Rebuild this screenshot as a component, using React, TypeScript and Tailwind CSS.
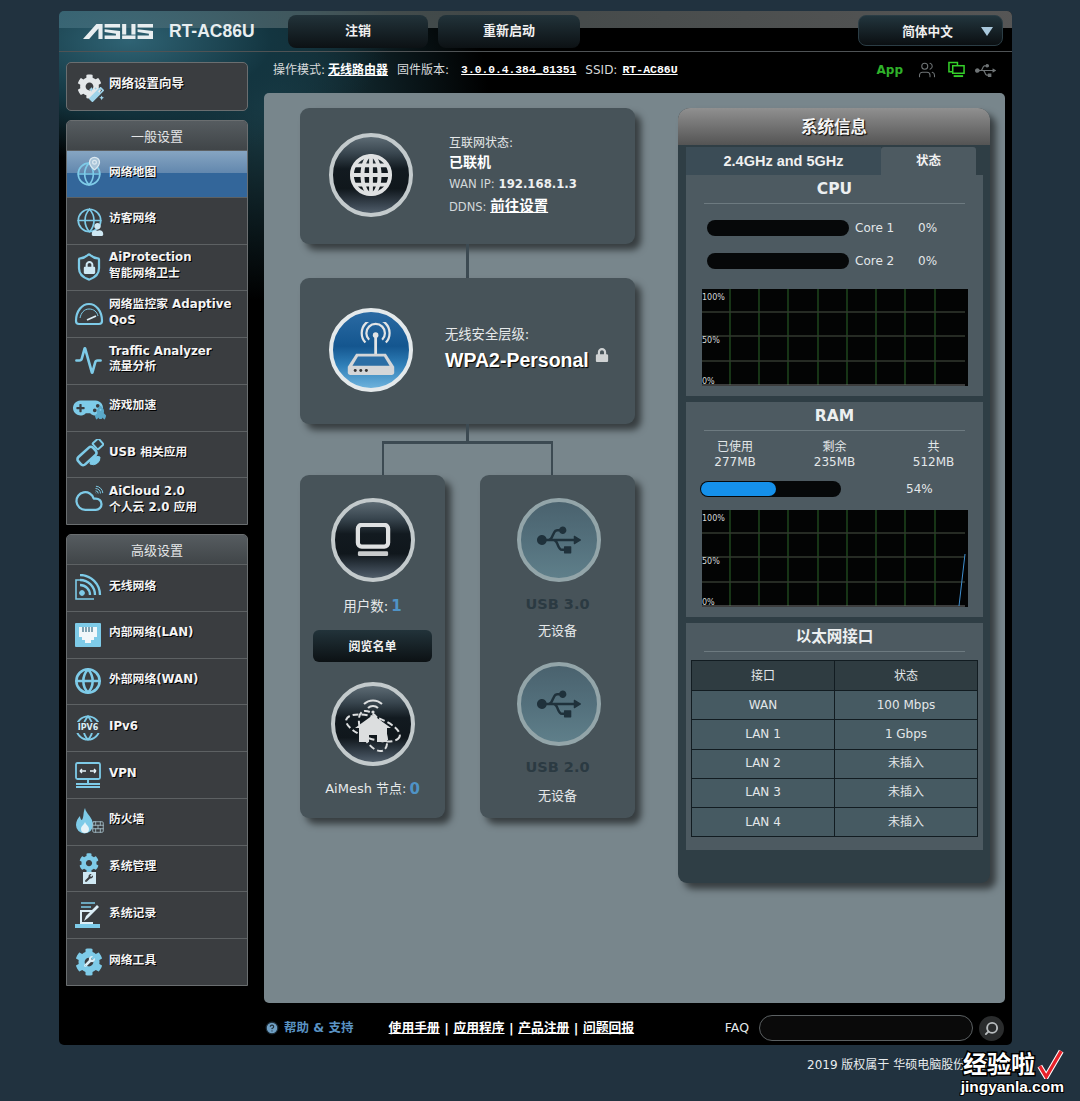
import React from 'react'
import {
  Globe, MapPin, Shield, Activity, Cloud, Wifi, BrickWall, Search, HelpCircle, Users,
} from 'lucide-react'
import { FaCog, FaGamepad, FaWrench, FaUsb, FaUser, FaLock, FaRocket, FaMagic } from 'react-icons/fa'

const FONT = "font-['DejaVu_Sans','Noto_Sans_CJK_SC',sans-serif]"

function AsusLogo() {
  return (
    <svg width="70" height="15" viewBox="0 0 68 17" preserveAspectRatio="none" fill="#e8eef0">
      <polygon points="0,17 13,0 19,0 19,17 15,17 15,5 6,17" />
      <rect x="21" y="0" width="15" height="4" />
      <polygon points="21,6 36,8 36,17 21,17 21,13 32,13 32,11 21,9" />
      <rect x="38" y="0" width="4" height="12" />
      <rect x="38" y="13" width="13" height="4" />
      <rect x="47" y="0" width="4" height="12" />
      <rect x="53" y="0" width="15" height="4" />
      <polygon points="53,6 68,8 68,17 53,17 53,13 64,13 64,11 53,9" />
    </svg>
  )
}

function GlobeLattice() {
  return (
    <svg width="44" height="44" viewBox="0 0 46 46" fill="none" stroke="#dfe1e2" strokeWidth="4">
      <circle cx="23" cy="23" r="20" />
      <ellipse cx="23" cy="23" rx="9" ry="20" />
      <path d="M23 3v40M3 23h40M6 13h34M6 33h34" />
    </svg>
  )
}

function RouterGlyph() {
  return (
    <svg width="52" height="56" viewBox="0 0 56 60" fill="none">
      <path d="M33 38V16" stroke="#e2e4e5" strokeWidth="3" />
      <circle cx="33" cy="14" r="3" fill="#e2e4e5" />
      <path d="M26 19a10 10 0 1 1 14 0M22 22a15 15 0 1 1 22 0" stroke="#e2e4e5" strokeWidth="2.4" />
      <path d="M12 34h32l9 14v6a3 3 0 0 1-3 3H6a3 3 0 0 1-3-3v-6z" fill="#d4d6d8" />
      <path d="M14 37h28l6 10H8z" fill="#2b6ea5" />
      <circle cx="11" cy="52" r="1.6" fill="#333" />
      <circle cx="17" cy="52" r="1.6" fill="#333" />
      <circle cx="23" cy="52" r="1.6" fill="#333" />
    </svg>
  )
}

function ClientGlyph() {
  return (
    <svg width="36" height="34" viewBox="0 0 38 36" fill="none">
      <rect x="3" y="2" width="32" height="23" rx="4" stroke="#dfe1e2" strokeWidth="4.5" />
      <rect x="3" y="30" width="32" height="5" rx="1.5" fill="#c9cbcc" />
    </svg>
  )
}

function MeshGlyph() {
  return (
    <svg width="66" height="58" viewBox="0 0 66 58" fill="none">
      <path d="M24 9a13 13 0 0 1 18 0M28 13a7 7 0 0 1 10 0" stroke="#dcdedf" strokeWidth="2" />
      <circle cx="33" cy="17" r="1.6" fill="#dcdedf" />
      <ellipse cx="33" cy="33" rx="28" ry="11" stroke="#dcdedf" strokeWidth="2" strokeDasharray="6 3" transform="rotate(18 33 33)" />
      <ellipse cx="33" cy="36" rx="11" ry="22" stroke="#dcdedf" strokeWidth="2" strokeDasharray="6 3" transform="rotate(-28 33 36)" />
      <path d="M33 20 51 33h-4v14H37v-7h-8v7H19V33h-4z" fill="#dcdedf" />
    </svg>
  )
}

function HubCircle({ kind, children }: { kind: 'dark' | 'blue' | 'usb'; children: React.ReactNode }) {
  const styles = {
    dark: 'border-[#c3cacc] bg-[linear-gradient(to_bottom,#5d6b74_0%,#38454e_22%,#121a20_42%,#10171c_68%,#3f4b57_92%,#515e6a_100%)]',
    blue: 'border-[#e4e9eb] bg-[linear-gradient(to_bottom,#2a6aa3_0%,#14568f_45%,#2f7fb8_70%,#6db2dc_100%)]',
    usb: 'border-[#93a5a9] bg-[linear-gradient(to_bottom,#4a626e_0%,#54717d_55%,#5f7f8a_100%)]',
  }
  return (
    <div className={`flex h-[84px] w-[84px] shrink-0 items-center justify-center rounded-full border-[4px] ${styles[kind]}`}>
      {children}
    </div>
  )
}

const CYAN = 'text-[#7ecbe8]'

function Stack({ base, over, overClass }: { base: React.ReactNode; over: React.ReactNode; overClass: string }) {
  return (
    <span className={`relative flex h-[30px] w-[30px] items-center justify-center ${CYAN}`}>
      {base}
      <span className={`absolute ${overClass}`}>{over}</span>
    </span>
  )
}

const generalItems: { label: React.ReactNode; icon: React.ReactNode; active?: boolean }[] = [
  {
    label: '网络地图',
    active: true,
    icon: <Stack base={<Globe size={26} strokeWidth={1.5} />} over={<MapPin size={15} className="fill-[#a9c4d8] text-[#dbe8f0]" />} overClass="right-[2px] -top-[3px]" />,
  },
  {
    label: '访客网络',
    icon: <Stack base={<Globe size={27} strokeWidth={1.5} />} over={<FaUser size={13} className="text-[#cfe8f3]" />} overClass="right-0 bottom-0" />,
  },
  {
    label: <>AiProtection<br />智能网络卫士</>,
    icon: <Stack base={<Shield size={30} strokeWidth={1.8} />} over={<FaLock size={13} className="text-[#cfe8f3]" />} overClass="left-[9px] top-[9px]" />,
  },
  {
    label: <>网络监控家 Adaptive<br />QoS</>,
    icon: (
      <svg width="30" height="24" viewBox="0 0 30 24" fill="none" className={CYAN} stroke="currentColor">
        <path d="M2 19C2 9 8 2 15 2s13 7 13 17c0 1.500-1 3-3 3H5c-2 0-3-1.500-3-3z" strokeWidth="2.2" />
        <path d="M6 16c1-5 4-9 9-9s8 3 9 7" strokeWidth="1" />
        <path d="M13 18l9-4" stroke="#dceef6" strokeWidth="1.8" />
      </svg>
    ),
  },
  {
    label: <>Traffic Analyzer<br />流量分析</>,
    icon: <span className={CYAN}><Activity size={29} strokeWidth={2.2} /></span>,
  },
  {
    label: '游戏加速',
    icon: <Stack base={<FaGamepad size={30} className="-ml-[3px]" />} over={<FaRocket size={13} className="-rotate-45 text-[#5aa9c9]" />} overClass="right-[-3px] bottom-[2px]" />,
  },
  {
    label: 'USB 相关应用',
    icon: (
      <svg width="30" height="30" viewBox="0 0 30 30" fill="none" className={CYAN} stroke="currentColor">
        <rect x="3" y="12" width="20" height="10" rx="3" transform="rotate(-42 13 17)" strokeWidth="2.6" fill="#3a3d40" />
        <rect x="20" y="1" width="8" height="8" rx="1" transform="rotate(-42 24 5)" strokeWidth="2" />
        <path d="M16 25a7 7 0 0 1 10-7 7 7 0 0 1-10 7z" fill="currentColor" />
      </svg>
    ),
  },
  {
    label: <>AiCloud 2.0<br />个人云 2.0 应用</>,
    icon: <Stack base={<Cloud size={30} strokeWidth={1.8} />} over={<Wifi size={11} className="rotate-45" />} overClass="right-0 -top-[1px]" />,
  },
]

const advancedItems: { label: React.ReactNode; icon: React.ReactNode }[] = [
  {
    label: '无线网络',
    icon: (
      <svg width="28" height="28" viewBox="0 0 28 28" fill="none" stroke="currentColor" className={CYAN}>
        <path d="M20 25H2V6h6" strokeWidth="1.6" />
        <circle cx="8" cy="19" r="2.4" fill="currentColor" />
        <path d="M6 11a10 10 0 0 1 10 10M6 6a15 15 0 0 1 15 15M6 1a20 20 0 0 1 20 20" strokeWidth="2.3" />
      </svg>
    ),
  },
  {
    label: '内部网络(LAN)',
    icon: (
      <svg width="28" height="28" viewBox="0 0 28 28" className={CYAN}>
        <rect x="1" y="2" width="26" height="24" fill="currentColor" rx="1" />
        <path d="M5 6h18v10h-3v3h-3v3h-6v-3H8v-3H5z" fill="#f1f7fa" />
        <path d="M9 6v5M12 6v5M15 6v5M18 6v5" stroke="#43768c" strokeWidth="1.3" />
      </svg>
    ),
  },
  {
    label: '外部网络(WAN)',
    icon: <span className={CYAN}><Globe size={28} strokeWidth={2.2} /></span>,
  },
  {
    label: 'IPv6',
    icon: (
      <span className={`relative flex h-[28px] w-[28px] items-center justify-center ${CYAN}`}>
        <Globe size={28} strokeWidth={1.6} />
        <span className="absolute inset-x-0 top-[8px] bg-[#3a3d40] text-center text-[8px] leading-[11px] font-bold text-[#d8eef7]">IPV6</span>
      </span>
    ),
  },
  {
    label: 'VPN',
    icon: (
      <svg width="28" height="28" viewBox="0 0 28 28" fill="none" stroke="currentColor" className={CYAN}>
        <rect x="2" y="2" width="24" height="16" rx="1.5" strokeWidth="1.8" />
        <path d="M6 10h6M6 10l2-2M6 10l2 2M22 10h-6M22 10l-2-2M22 10l-2 2" stroke="#e6f3f8" strokeWidth="1.4" />
        <path d="M14 18v4M2 23h24M2 26h24" strokeWidth="2" />
      </svg>
    ),
  },
  {
    label: '防火墙',
    icon: (
      <Stack
        base={
          <svg width="22" height="28" viewBox="0 0 22 28" className="-ml-[8px]">
            <path d="M11 0c1 6 8 9 8 17a8.500 8.500 0 0 1-17 0c0-4 2-7 4-9 0 2 1 4 2 4 2-3 1-8 3-12z" fill="currentColor" />
            <path d="M11 14c1 3 4 4 4 7a4 4 0 0 1-8 0c0-3 3-4 4-7z" fill="#e6f3f8" />
          </svg>
        }
        over={<BrickWall size={14} strokeWidth={1.4} className="text-[#a9c4ce]" />}
        overClass="right-[-1px] bottom-[3px]"
      />
    ),
  },
  {
    label: '系统管理',
    icon: <Stack base={<FaCog size={20} className="-mt-[11px]" />} over={<span className="flex h-[12px] w-[13px] items-center justify-center bg-[#cfe8f3]"><FaWrench size={8} className="text-[#3a3d40]" /></span>} overClass="left-[8.5px] bottom-[-1px]" />,
  },
  {
    label: '系统记录',
    icon: (
      <svg width="28" height="28" viewBox="0 0 28 28" fill="none" stroke="currentColor" className={CYAN}>
        <path d="M7 2h14M7 6h10" strokeWidth="1.6" />
        <path d="M20 10H7v12h12" stroke="#dceef6" strokeWidth="2" />
        <path d="M10 20l2-5 11-11 2 2-11 11z" fill="#dceef6" stroke="none" />
        <rect x="1" y="23" width="25" height="4" fill="currentColor" stroke="none" />
      </svg>
    ),
  },
  {
    label: '网络工具',
    icon: <Stack base={<FaCog size={28} />} over={<FaWrench size={11} className="text-[#dbeef6]" />} overClass="left-[9.5px] top-[9.5px]" />,
  },
]

function SideRow({ label, icon, active }: { label: React.ReactNode; icon: React.ReactNode; active?: boolean }) {
  return (
    <div
      className={`flex h-[46.75px] items-center border-t border-[#5d6163] pl-[7px] ${
        active ? 'bg-[linear-gradient(to_bottom,#86a5c2_0%,#6388ae_47%,#33669a_48%,#33669a_100%)]' : 'bg-[#3a3d40]'
      }`}
    >
      <span className="flex w-[35px] shrink-0 items-center">{icon}</span>
      <span className="pb-[3px] text-[11.8px] leading-[15.5px] font-bold whitespace-nowrap text-[#f4f4f4] [text-shadow:1px_1px_0_#000]">{label}</span>
    </div>
  )
}

function SideGroup({ title, items }: { title: string; items: { label: React.ReactNode; icon: React.ReactNode; active?: boolean }[] }) {
  return (
    <div className="overflow-hidden rounded-t-[5px] border border-[#6a6e70] bg-[#3a3d40]">
      <div className="flex h-[29px] items-center justify-center bg-[linear-gradient(to_bottom,#565c60,#404548)] pt-[3px] text-[13px] text-[#e4e6e7]">
        {title}
      </div>
      {items.map((item, i) => (
        <SideRow key={i} {...item} />
      ))}
    </div>
  )
}

function CpuBar({ label }: { label: string }) {
  return (
    <div className="flex items-center text-[12px] text-[#e3e7e9]">
      <div className="h-[16px] w-[142px] rounded-full bg-[#060809]" />
      <span className="ml-[6px] w-[63px]">{label}</span>
      <span>0%</span>
    </div>
  )
}

function MiniGraph({ spike }: { spike?: boolean }) {
  const vlines = [28, 57, 86, 116, 145, 174, 203, 233]
  return (
    <svg width="266" height="97" viewBox="0 0 266 97" className="mx-auto block bg-[#030404]">
      {vlines.map(x => (
        <line key={x} x1={x} y1="0" x2={x} y2="96" stroke="#214a1f" strokeWidth="1.4" />
      ))}
      {[23, 47, 72].map(y => (
        <line key={y} x1="0" y1={y} x2="263" y2={y} stroke="#33382f" strokeWidth="1.4" />
      ))}
      <line x1="0" y1="96" x2="263" y2="96" stroke="#777" strokeWidth="1" />
      {spike && <line x1="257" y1="96" x2="263" y2="44" stroke="#3f8fd0" strokeWidth="1" />}
      <g fill="#d5d8d9" fontSize="8" fontFamily="'DejaVu Sans',sans-serif">
        <text x="0" y="11">100%</text>
        <text x="0" y="54">50%</text>
        <text x="0" y="95">0%</text>
      </g>
    </svg>
  )
}

function SectionTitle({ children }: { children: React.ReactNode }) {
  return (
    <div className="mx-[18px] flex h-[29px] items-center justify-center border-b border-[#6d7a80] pt-[2px] text-[15.5px] font-bold text-[#eceff0]">
      {children}
    </div>
  )
}

const ethernetRows = [
  ['WAN', '100 Mbps'],
  ['LAN 1', '1 Gbps'],
  ['LAN 2', '未插入'],
  ['LAN 3', '未插入'],
  ['LAN 4', '未插入'],
]

const CARD = 'rounded-[9px] bg-[#475359] shadow-[6px_6px_7px_rgba(0,0,0,0.55)]'

export default function App() {
  return (
    <div className={`min-h-[1101px] bg-[#21323f] pt-[11px] pl-[59px] ${FONT}`}>
      <div className="h-[1034px] w-[953px] rounded-[5px] bg-[radial-gradient(ellipse_260px_120px_at_70px_30px,#2f6374_0%,#133540_55%,transparent_100%),radial-gradient(ellipse_220px_200px_at_210px_90px,#1c3f49_0%,transparent_100%),linear-gradient(#000,#000)]">
        {/* top bar */}
        <div className="flex h-[41px] items-start rounded-t-[5px] border-b border-[#4f5355] bg-[linear-gradient(to_right,rgba(65,110,125,0.75)_0%,rgba(90,100,100,0.7)_35%,rgba(95,95,95,0.9)_100%)] bg-[length:100%_17px] bg-no-repeat pt-[4px]">
          <div className="mt-[9px] ml-[24px]">
            <AsusLogo />
          </div>
          <span className="mt-[3px] ml-[16px] w-[33px] overflow-visible font-['Liberation_Sans'] text-[17.5px] font-bold whitespace-nowrap text-[#e8eef0]">RT-AC86U</span>
          <button className="ml-[86px] h-[33px] w-[140px] rounded-[8px] bg-[linear-gradient(to_bottom,#22333a,#0c1114)] pb-[2px] text-[13px] font-bold text-[#f0f0f0]">注销</button>
          <button className="ml-[10px] h-[33px] w-[142px] rounded-[8px] bg-[linear-gradient(to_bottom,#22333a,#0c1114)] pb-[2px] text-[13px] font-bold text-[#f0f0f0]">重新启动</button>
          <div className="relative ml-[278px] flex h-[31px] w-[145px] items-center justify-center rounded-[8px] border border-[#2b3d45] bg-[linear-gradient(to_bottom,#22353d,#0b0f12)] pt-[3px] pr-[6px] text-[12.7px] font-bold text-[#f0f0f0]">
            简体中文
            <span className="absolute top-[11px] right-[9px] h-0 w-0 border-x-[6px] border-t-[9px] border-x-transparent border-t-[#a9c8dc]" />
          </div>
        </div>

        <div className="flex">
          {/* side menu */}
          <div className="mt-[10px] ml-[7px] flex w-[182px] flex-col gap-[9px]">
            <div className="flex h-[49px] items-center rounded-[5px] border border-[#6a6e70] bg-[#3a3d40] pl-[7px]">
              <span className="relative mr-[5px] flex h-[30px] w-[30px] items-center justify-center text-[#e4e8ea]">
                <FaCog size={25} />
                <FaMagic size={15} className="absolute right-0 bottom-0 text-[#9fd4ea]" />
              </span>
              <span className="pb-[4px] text-[12.5px] font-bold text-[#f4f4f4] [text-shadow:1px_1px_0_#000]">网络设置向导</span>
            </div>
            <SideGroup title="一般设置" items={generalItems} />
            <SideGroup title="高级设置" items={advancedItems} />
          </div>

          {/* main */}
          <div className="ml-[16px] w-[741px]">
            <div className="flex h-[41px] items-start pt-[9px] text-[12px] text-[#d8dadb]">
              <span className="ml-[9px]">操作模式:</span>
              <span className="ml-[3px] font-bold text-white underline">无线路由器</span>
              <span className="ml-[9px]">固件版本:</span>
              <span className="ml-[12px] font-['Liberation_Mono'] text-[11.3px] leading-[18px] font-bold text-white underline">3.0.0.4.384_81351</span>
              <span className="ml-[9px]">SSID:</span>
              <span className="ml-[5px] font-['Liberation_Mono'] text-[11.5px] leading-[18px] font-bold text-white underline">RT-AC86U</span>
              <span className="ml-auto text-[12px] font-bold text-[#2fb12a]">App</span>
              <Users size={18} strokeWidth={1.4} className="ml-[15px] text-[#6f7476]" />
              <svg width="17" height="17" viewBox="0 0 18 17" fill="none" stroke="#35d02a" strokeWidth="1.6" className="ml-[12px]">
                <path d="M5 11H1V1h9v3" />
                <rect x="5" y="4.5" width="12" height="8" />
                <path d="M6 15.5h10" strokeWidth="2" />
              </svg>
              <FaUsb size={21} className="mr-[9px] ml-[10px] -mt-[1px] text-[#6f7476]" />
            </div>

            <div className="flex h-[910px] rounded-[5px] bg-[#78868c] pt-[15px] pl-[36px]">
              {/* network map */}
              <div className="w-[335px]">
                <div className={`flex h-[136px] items-center pb-[2px] pl-[29px] ${CARD}`}>
                  <HubCircle kind="dark"><GlobeLattice /></HubCircle>
                  <div className="mt-[1px] ml-[36px] text-[#e6e9ea]">
                    <div className="text-[12px] leading-[15px]">互联网状态:</div>
                    <div className="mt-[2px] text-[14px] leading-[18px] font-bold text-white">已联机</div>
                    <div className="mt-[4px] text-[11.7px] leading-[18px] text-[#d3d8da]">WAN IP: <b className="text-[#eef0f1]">192.168.1.3</b></div>
                    <div className="mt-[4px] text-[11.5px] leading-[18px] text-[#d3d8da]">DDNS: <b className="text-[14.5px] text-white underline">前往设置</b></div>
                  </div>
                </div>
                <div className="mx-auto h-[34px] w-[3px] bg-[#3c4a52]" />
                <div className={`flex h-[146px] items-center pb-[2px] pl-[29px] ${CARD}`}>
                  <HubCircle kind="blue"><RouterGlyph /></HubCircle>
                  <div className="ml-[32px] text-[#e6e9ea]">
                    <div className="text-[13.3px] leading-[16px]">无线安全层级:</div>
                    <div className="mt-[4px] flex items-start font-['Liberation_Sans'] text-[19.5px] leading-[26px] font-bold text-white [text-shadow:1px_1px_1px_#000]">
                      WPA2-Personal
                      <FaLock size={14} className="mt-[1px] ml-[6px] text-[#cfd2d3]" />
                    </div>
                  </div>
                </div>
                <div className="mx-auto h-[17px] w-[3px] bg-[#3c4a52]" />
                <div className="ml-[82px] h-[34px] w-[171px] border-x-[2px] border-t-[3px] border-[#3c4a52]" />
                <div className="flex justify-between">
                  <div className={`flex h-[343px] w-[145px] flex-col items-center pt-[23px] ${CARD}`}>
                    <HubCircle kind="dark"><ClientGlyph /></HubCircle>
                    <div className="mt-[15px] flex h-[18px] items-center text-[13.5px] text-[#e6e9ea]">
                      用户数:<b className="ml-[3px] text-[15px] text-[#4f93c6]">1</b>
                    </div>
                    <button className="mt-[15px] h-[32px] w-[119px] rounded-[6px] bg-[linear-gradient(to_bottom,#22333a,#0c1114)] pt-[2px] text-[12px] font-bold text-[#f0f0f0]">阅览名单</button>
                    <div className="mt-[20px]">
                      <HubCircle kind="dark"><MeshGlyph /></HubCircle>
                    </div>
                    <div className="mt-[14px] flex h-[18px] items-center text-[13px] whitespace-nowrap text-[#e6e9ea]">
                      AiMesh 节点:<b className="ml-[3px] text-[15px] text-[#4f93c6]">0</b>
                    </div>
                  </div>
                  <div className={`flex h-[343px] w-[155px] flex-col items-center pt-[23px] ${CARD}`}>
                    <div className="ml-[3px]">
                      <HubCircle kind="usb"><FaUsb size={44} className="text-[#1f313b]" /></HubCircle>
                    </div>
                    <div className="mt-[12px] h-[20px] text-[14.5px] leading-[20px] font-bold text-[#2b3a42]">USB 3.0</div>
                    <div className="mt-[8px] text-[13px] leading-[18px] text-[#e6e9ea]">无设备</div>
                    <div className="mt-[22px] ml-[3px]">
                      <HubCircle kind="usb"><FaUsb size={44} className="text-[#1f313b]" /></HubCircle>
                    </div>
                    <div className="mt-[11px] h-[20px] text-[14.5px] leading-[20px] font-bold text-[#2b3a42]">USB 2.0</div>
                    <div className="mt-[10px] text-[13px] leading-[18px] text-[#e6e9ea]">无设备</div>
                  </div>
                </div>
              </div>

              {/* system info */}
              <div className="ml-[43px] flex h-[775px] w-[312px] flex-col rounded-t-[12px] rounded-b-[9px] bg-[#2f3e45] shadow-[6px_6px_7px_rgba(0,0,0,0.55)]">
                <div className="flex h-[37px] shrink-0 items-center justify-center rounded-t-[12px] bg-[linear-gradient(to_bottom,#909090,#545454)] pt-[3px] text-[16.5px] font-bold text-[#f4f4f4] [text-shadow:1px_1px_1px_#000]">
                  系统信息
                </div>
                <div className="mt-[2px] ml-[8px] flex h-[28px] w-[290px] text-[12.5px] font-bold text-[#f0f0f0]">
                  <div className="flex w-[195px] items-center justify-center bg-[#3b4c56] pt-[2px] font-['Liberation_Sans'] text-[14.5px]">2.4GHz and 5GHz</div>
                  <div className="flex w-[95px] items-center justify-center rounded-t-[3px] bg-[#4d5a61]">状态</div>
                </div>
                <div className="ml-[8px] flex w-[297px] flex-col gap-[6px]">
                  <div className="h-[221px] bg-[#4d5a61]">
                    <SectionTitle>CPU</SectionTitle>
                    <div className="mt-[15px] ml-[21px] flex flex-col gap-[15px]">
                      <CpuBar label="Core 1" />
                      <CpuBar label="Core 2" />
                    </div>
                    <div className="mt-[19px]">
                      <MiniGraph />
                    </div>
                  </div>
                  <div className="h-[215px] bg-[#4d5a61]">
                    <SectionTitle>RAM</SectionTitle>
                    <div className="mt-[9px] grid grid-cols-3 text-center text-[12px] leading-[15px] text-[#e3e7e9]">
                      <div className="-ml-[1px]">已使用<br />277MB</div>
                      <div>剩余<br />235MB</div>
                      <div>共<br />512MB</div>
                    </div>
                    <div className="mt-[10px] ml-[14px] flex items-center">
                      <div className="h-[16px] w-[141px] rounded-full bg-[#060809] p-[1px]">
                        <div className="h-full w-[54%] rounded-full bg-[#1590ea]" />
                      </div>
                      <span className="ml-[65px] text-[12px] text-[#e3e7e9]">54%</span>
                    </div>
                    <div className="mt-[12px]">
                      <MiniGraph spike />
                    </div>
                  </div>
                  <div className="h-[227px] bg-[#4d5a61]">
                    <SectionTitle>以太网接口</SectionTitle>
                    <table className="mt-[8px] ml-[5px] w-[287px] table-fixed border-collapse text-center text-[12px] text-[#e3e7e9]">
                      <thead>
                        <tr className="h-[30px] bg-[#2f3c41]">
                          <th className="border border-[#121c21] font-normal">接口</th>
                          <th className="border border-[#121c21] font-normal">状态</th>
                        </tr>
                      </thead>
                      <tbody>
                        {ethernetRows.map(([port, state]) => (
                          <tr key={port} className="h-[29.25px] bg-[#465a62]">
                            <td className="border border-[#121c21] pb-[1px]">{port}</td>
                            <td className="border border-[#121c21] pb-[1px]">{state}</td>
                          </tr>
                        ))}
                      </tbody>
                    </table>
                  </div>
                </div>
              </div>
            </div>

            {/* footer */}
            <div className="flex h-[42px] items-center pt-[8px]">
              <HelpCircle size={14} className="ml-[1px] fill-[#6f9fc4] text-[#1d2d38]" />
              <span className="ml-[5px] text-[12.5px] font-bold text-[#5a93c4]">帮助 &amp; 支持</span>
              <span className="ml-[35px] text-[12.8px] font-bold text-white">
                <u>使用手册</u> | <u>应用程序</u> | <u>产品注册</u> | <u>问题回报</u>
              </span>
              <span className="ml-auto text-[12.5px] text-[#e3e7e9]">FAQ</span>
              <div className="ml-[10px] h-[26px] w-[214px] rounded-full border border-[#5b6062] bg-[#0a0a0a]" />
              <span className="mr-px ml-[6px] flex h-[25px] w-[25px] items-center justify-center rounded-full bg-[#2a2c2d]">
                <Search size={15} strokeWidth={3} className="-scale-x-100 text-[#b8bcbe]" />
              </span>
            </div>
          </div>
        </div>
      </div>

      <div className="mt-[11px] ml-[748px] text-[12px] whitespace-nowrap text-[#e8ecee]">2019 版权属于 华硕电脑股份有限公司</div>

      {/* site watermark */}
      <div className="absolute top-[1048px] left-[955px] flex h-[53px] w-[125px] flex-col items-end overflow-hidden pr-[16px]">
        <div className="flex items-center">
          <span className="mt-[2px] text-[24px] leading-[30px] font-bold text-white [-webkit-text-stroke:3px_#000] [paint-order:stroke_fill]">经验啦</span>
          <svg width="27" height="30" viewBox="0 0 24 28" fill="none" className="ml-[2px]">
            <path d="M2 16l6 10L22 2" stroke="#fff" strokeWidth="5" />
            <path d="M2 16l6 10L22 2" stroke="#e8222a" strokeWidth="3" />
          </svg>
        </div>
        <span className="-mt-[2px] font-['Liberation_Sans'] text-[15.5px] leading-[18px] font-bold whitespace-nowrap text-white [-webkit-text-stroke:2px_#000] [paint-order:stroke_fill]">jingyanla.com</span>
      </div>
    </div>
  )
}
